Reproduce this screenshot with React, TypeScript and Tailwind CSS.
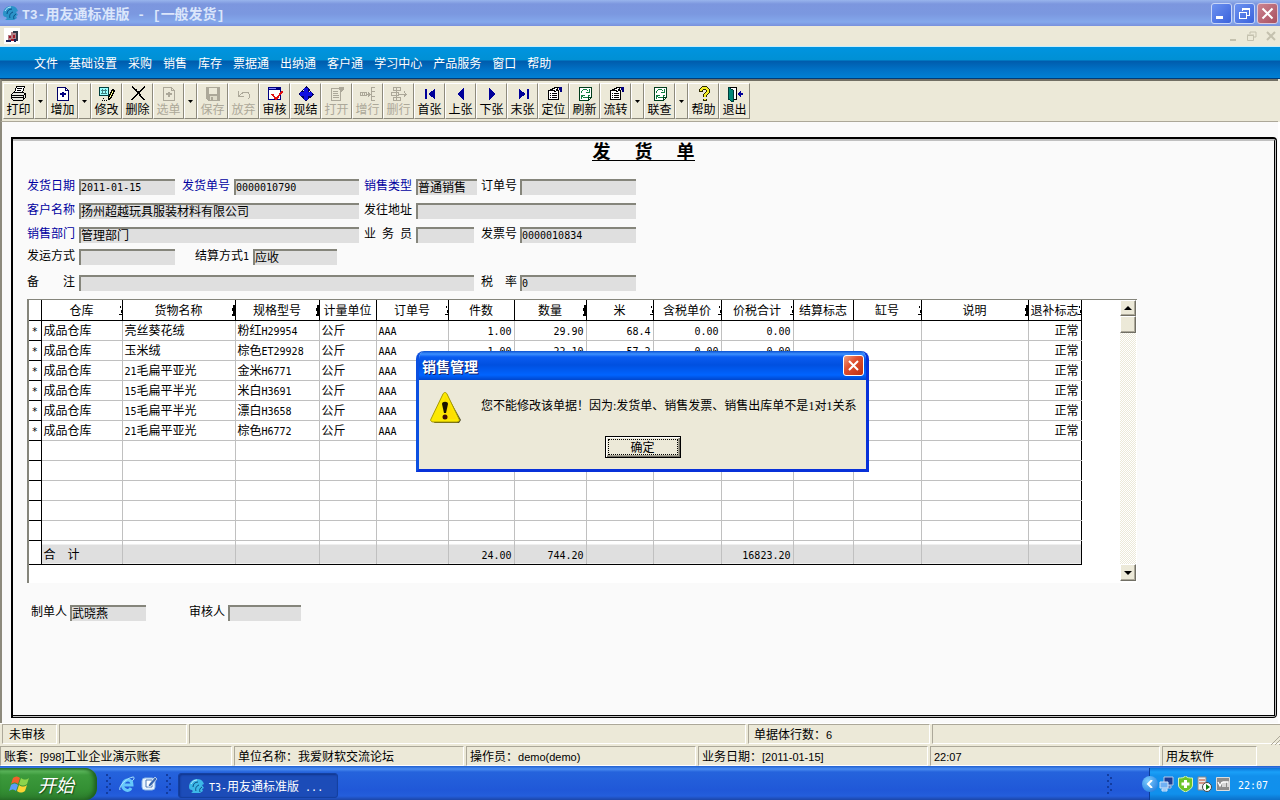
import type { ReactNode } from 'react';
import { clsx } from 'clsx';

type Tool = { name: string; icon: ReactNode; menu?: boolean; disabled?: boolean };
type Column = { title: string; width: number; align?: 'right'; mark?: 'solid' | 'thin' };

const menus = ['文件', '基础设置', '采购', '销售', '库存', '票据通', '出纳通', '客户通', '学习中心', '产品服务', '窗口', '帮助'];

const columns: Column[] = [
  { title: '仓库', width: 81, mark: 'thin' },
  { title: '货物名称', width: 113, mark: 'solid' },
  { title: '规格型号', width: 84, mark: 'solid' },
  { title: '计量单位', width: 57 },
  { title: '订单号', width: 72, mark: 'thin' },
  { title: '件数', width: 66, align: 'right' },
  { title: '数量', width: 72, align: 'right', mark: 'solid' },
  { title: '米', width: 67, align: 'right', mark: 'thin' },
  { title: '含税单价', width: 68, align: 'right', mark: 'thin' },
  { title: '价税合计', width: 72, align: 'right', mark: 'thin' },
  { title: '结算标志', width: 60 },
  { title: '缸号', width: 68, mark: 'thin' },
  { title: '说明', width: 107, mark: 'solid' },
  { title: '退补标志', width: 53, align: 'right', mark: 'thin' },
];

const rows = [
  ['成品仓库', '亮丝葵花绒', '粉红H29954', '公斤', 'AAA', '1.00', '29.90', '68.4', '0.00', '0.00', '', '', '', '正常'],
  ['成品仓库', '玉米绒', '棕色ET29928', '公斤', 'AAA', '1.00', '22.10', '57.2', '0.00', '0.00', '', '', '', '正常'],
  ['成品仓库', '21毛扁平亚光', '金米H6771', '公斤', 'AAA', '', '', '', '', '', '', '', '', '正常'],
  ['成品仓库', '15毛扁平半光', '米白H3691', '公斤', 'AAA', '', '', '', '', '', '', '', '', '正常'],
  ['成品仓库', '15毛扁平半光', '漂白H3658', '公斤', 'AAA', '', '', '', '', '', '', '', '', '正常'],
  ['成品仓库', '21毛扁平亚光', '棕色H6772', '公斤', 'AAA', '', '', '', '', '', '', '', '', '正常'],
];

const totals = ['合　计', '', '', '', '', '24.00', '744.20', '', '', '16823.20', '', '', '', ''];

const emptyRows = [0, 1, 2, 3, 4];

// Latin runs are set smaller so that two of them take the width of one Chinese character
function Mixed({ text, latin = "font-['DejaVu_Sans_Mono',monospace] text-[10px]" }: { text: string; latin?: string }) {
  return (
    <>
      {text.split(/([\x20-\x7e]+)/).filter(Boolean).map((part, i) =>
        /^[\x20-\x7e]+$/.test(part) ? <span key={i} className={clsx('leading-none whitespace-pre', latin)}>{part}</span> : part
      )}
    </>
  );
}

function Glyph({ children, size = 16 }: { children: ReactNode; size?: number }) {
  return (
    <svg width={size} height={size} viewBox="0 0 16 16" fill="none" shapeRendering="crispEdges" aria-hidden="true" className="shrink-0">
      {children}
    </svg>
  );
}

const printIcon = (
  <Glyph>
    <path d="M5.500 .5h8l-2 6h-8z" fill="#fff" stroke="#000" />
    <path d="M6 2.500h5M6 4.500h4" stroke="#000" />
    <path d="M2.500 6.500h10l2 2v3l-3 3h-9l-2-2v-4z" fill="#e8e8e0" stroke="#000" />
    <path d="M1 9.500h11M1 11.500h11M12.500 9v4M12 9.500l3-2" stroke="#000" />
  </Glyph>
);

const addIcon = (
  <Glyph>
    <path d="M2.500 1.500h8l3 3v10h-11z" fill="#fff" stroke="#000066" />
    <path d="M10.500 1.500v3h3" stroke="#000066" />
    <path d="M8 6v5M5 8h6" stroke="#000080" strokeWidth="2" />
  </Glyph>
);

const editIcon = (
  <Glyph>
    <path d="M.5 1.500h9v8h-9z" fill="#9ff" stroke="#004040" />
    <path d="M2 4.500h6M2 7.500h6M3.500 3v5M6.500 3v5" stroke="#408080" />
    <path d="M13.500 3.500l2 1-4 8-2 1v-2z" fill="#ff8" stroke="#000" />
    <path d="M3 14.500h1M5 14.500h1M7 14.500h1M4 12.500h1" stroke="#000" />
  </Glyph>
);

const deleteIcon = (
  <Glyph>
    <path d="M2 1l4 3 8 10M15 1L9 6l-7 8" stroke="#000" strokeWidth="1.600" />
  </Glyph>
);

const pickIcon = (
  <Glyph>
    <path d="M2.500 1.500h8l3 3v10h-11z" stroke="#aca899" />
    <path d="M10.500 1.500v3h3" stroke="#aca899" />
    <path d="M8 6v5M5 8h6" stroke="#aca899" strokeWidth="2" />
  </Glyph>
);

const saveIcon = (
  <Glyph>
    <path d="M1 1h14v14H3l-2-2z" fill="#aca899" />
    <path d="M4 2h8v6H4z" fill="#ece9d8" />
    <path d="M5 10h7v4H5z" fill="#dedbc9" />
    <path d="M6 11h2v3H6z" fill="#aca899" />
  </Glyph>
);

const undoIcon = (
  <Glyph>
    <path d="M2.500 5v5.500H8M3 10l4-3.500h5l1.500 2v3l-2 2" stroke="#aca899" />
  </Glyph>
);

const auditIcon = (
  <Glyph>
    <path d="M1.500 1.500h12v12h-12z" fill="#fff" stroke="#000080" />
    <path d="M1 1h13v3H1z" fill="#000080" />
    <path d="M2 2.500h7" stroke="#8888ff" />
    <path d="M5 8l4 5 7-8" stroke="#e01010" strokeWidth="2" />
  </Glyph>
);

const settleIcon = (
  <Glyph>
    <path d="M8 0l4 4-1 2 1-1 4 3-4 4-2-1 1 1-3 4-4-4 1-2-1 1-4-3 4-4 2 1-1-1z" fill="#000060" />
    <path d="M8 2v12M2 8h12" stroke="#1010e0" strokeWidth="4" />
  </Glyph>
);

const openIcon = (
  <Glyph>
    <path d="M2.500 2.500h9v12h-9zM4 5.500h5M4 7.500h5M4 9.500h6M4 11.500h6" stroke="#aca899" />
    <path d="M10 1h5v3l-2 1-2 2V4h-1z" fill="#aca899" />
  </Glyph>
);

const insertIcon = (
  <Glyph>
    <path d="M.5 6.500h6v3h-6zM2.500 6v4M4.500 6v4M7 8.500h3M8 6.500l2 2-2 2M11.500 2v12M11 1.500h4M11 5.500h4M11 10.500h4M11 14.500h4" stroke="#aca899" />
  </Glyph>
);

const removeIcon = (
  <Glyph>
    <path d="M2.500 1.500h7v3h-7zM2.500 11.500h7v3h-7zM.5 6.500h7v3h-7zM8 8.500h7M13 5.500l2 3-2 2M5.500 1v13" stroke="#aca899" />
  </Glyph>
);

const firstIcon = (
  <Glyph>
    <path d="M3 3h2v10H3zM13 3v10L6 8z" fill="#000099" />
  </Glyph>
);

const prevIcon = (
  <Glyph>
    <path d="M11 2v12L4 8z" fill="#000099" />
  </Glyph>
);

const nextIcon = (
  <Glyph>
    <path d="M5 2v12l7-6z" fill="#000099" />
  </Glyph>
);

const lastIcon = (
  <Glyph>
    <path d="M12 3h2v10h-2zM4 3v10l7-5z" fill="#000099" />
  </Glyph>
);

const locateIcon = (
  <Glyph>
    <path d="M2.500 4.500h10v9h-10z" fill="#fff" stroke="#000" />
    <path d="M4 7.500h1M6 7.500h5M4 9.500h1M6 9.500h5M4 11.500h1M6 11.500h5" stroke="#000" />
    <path d="M5.500 3.500l4-2h3l-3 4z" fill="#fff" stroke="#000" />
    <path d="M13 1h3v5h-2z" fill="#000080" />
  </Glyph>
);

const refreshIcon = (
  <Glyph>
    <path d="M2.500 1.500h12v10l-3 3h-9z" fill="#fff" stroke="#003c1c" />
    <path d="M4.500 7V5.500l2-2h3l2 2M12.500 3v3.500H9M12.500 9l-2 2.500h-4l-2-2M4.500 13V9.500H8" stroke="#108040" />
    <path d="M11.500 15v-3.500H15" stroke="#003c1c" />
  </Glyph>
);

const helpIcon = (
  <Glyph>
    <path d="M5 6V4l2-2h3l2 2v2L9 9v2M9 12.500v2" stroke="#2c2800" strokeWidth="4" />
    <path d="M5 5V4l2-2h3l2 2v2L9 9v2M9 13v1" stroke="#f4ee28" strokeWidth="2" />
  </Glyph>
);

const exitIcon = (
  <Glyph>
    <path d="M1.500 1.500h8v12h-8z" fill="#fff" stroke="#000" />
    <path d="M1 1l5 3v12l-5-3z" fill="#008878" stroke="#003c38" />
    <path d="M10 8l4-4v8z" fill="#000099" />
    <path d="M13 8h3" stroke="#000099" strokeWidth="2" />
  </Glyph>
);

const tools: Tool[] = [
  { name: '打印', icon: printIcon, menu: true },
  { name: '增加', icon: addIcon, menu: true },
  { name: '修改', icon: editIcon },
  { name: '删除', icon: deleteIcon },
  { name: '选单', icon: pickIcon, menu: true, disabled: true },
  { name: '保存', icon: saveIcon, disabled: true },
  { name: '放弃', icon: undoIcon, disabled: true },
  { name: '审核', icon: auditIcon },
  { name: '现结', icon: settleIcon },
  { name: '打开', icon: openIcon, disabled: true },
  { name: '增行', icon: insertIcon, disabled: true },
  { name: '删行', icon: removeIcon, disabled: true },
  { name: '首张', icon: firstIcon },
  { name: '上张', icon: prevIcon },
  { name: '下张', icon: nextIcon },
  { name: '末张', icon: lastIcon },
  { name: '定位', icon: locateIcon },
  { name: '刷新', icon: refreshIcon },
  { name: '流转', icon: locateIcon, menu: true },
  { name: '联查', icon: refreshIcon, menu: true },
  { name: '帮助', icon: helpIcon },
  { name: '退出', icon: exitIcon },
];

function AppLogo({ color }: { color: string }) {
  return (
    <svg width="17" height="16" viewBox="0 0 17 16" aria-hidden="true" className="shrink-0">
      <path d="M1 9C1 4 5 1 9 1c3 0 5 1 6 3l1 2-2 1 2 3-2 1 1 2-3 2H3c2-1 2-2 1-3-2 0-3-1-3-3z" fill={color} />
      <path d="M5 9c0-3 2-5 5-5M8 13c-1-2 0-5 3-6M12 14c-1-2 0-4 2-5" fill="none" stroke="#0b4f86" strokeWidth="1" />
      <path d="M3 6c1-2 3-4 6-4" fill="none" stroke="#b8ecff" strokeWidth="1" />
    </svg>
  );
}

function ToolbarButton({ tool }: { tool: Tool }) {
  const edge = 'border border-t-white border-l-white border-r-[#8d8a7c] border-b-[#8d8a7c]';
  return (
    <div className="flex">
      <button
        disabled={tool.disabled}
        className={clsx('flex h-9 w-[31px] flex-col items-center pt-[2px]', edge, tool.disabled ? 'text-[#aca899]' : 'text-black')}
      >
        {tool.icon}
        <span className="text-xs leading-[14px] whitespace-nowrap">{tool.name}</span>
      </button>
      {tool.menu && (
        <button aria-label={`${tool.name}菜单`} className={clsx('flex h-9 w-[13px] items-center justify-center', edge)}>
          <svg width="5" height="3" viewBox="0 0 5 3" aria-hidden="true"><path d="M0 0h5L2.500 3z" /></svg>
        </button>
      )}
    </div>
  );
}

function Field({ id, label, value = '', width, labelWidth = 'w-[52px]', blue, className }: {
  id: string; label: string; value?: string; width: string; labelWidth?: string; blue?: boolean; className?: string;
}) {
  const latin = /^[\x20-\x7e]*$/.test(value);
  return (
    <div className={clsx('flex items-start', className)}>
      <label htmlFor={id} className={clsx('text-xs leading-3 whitespace-nowrap', labelWidth, blue && 'text-[#0000a0]')}>
        <Mixed text={label} />
      </label>
      <input
        id={id}
        defaultValue={value}
        readOnly
        className={clsx(
          'h-4 border-t-2 border-l-2 border-[#85857b] bg-[#dfdfdf] leading-[14px] outline-none',
          latin ? "pb-[2px] font-['DejaVu_Sans_Mono',monospace] text-[10px]" : 'pb-1 text-xs',
          width
        )}
      />
    </div>
  );
}

function HeadMark({ kind }: { kind: 'solid' | 'thin' }) {
  return (
    <svg width="3" height="11" viewBox="0 0 3 11" shapeRendering="crispEdges" aria-hidden="true" className="absolute right-0 bottom-1">
      {kind === 'solid' ? <path d="M1 0h2v11H0V9h1V6H0V3h1z" /> : <path d="M1 1h1v2H1zM2 5h1v3H2zM0 9h3v1H0z" />}
    </svg>
  );
}

function DocumentTable() {
  return (
    <table className="table-fixed border-collapse self-start bg-white text-xs">
      <colgroup>
        <col width={12} />
        {columns.map(col => <col key={col.title} width={col.width} />)}
      </colgroup>
      <thead>
        <tr className="h-5">
          <th aria-label="标记" className="border-r border-b border-black p-0" />
          {columns.map(col => (
            <th key={col.title} className="relative overflow-hidden border-r border-b border-black p-0 leading-4 font-normal whitespace-nowrap">
              {col.title}
              {col.mark && <HeadMark kind={col.mark} />}
            </th>
          ))}
        </tr>
      </thead>
      <tbody>
        {rows.map((row, i) => (
          <tr key={i} className="h-5">
            <td className="border-r border-b border-black p-0 text-center leading-4"><Mixed text="*" /></td>
            {row.map((cell, c) => (
              <td
                key={c}
                className={clsx(
                  'border-r border-b border-[#c0c0c0] p-0 px-[2px] leading-4 whitespace-nowrap last:border-r-black',
                  columns[c].align === 'right' && 'text-right'
                )}
              >
                <Mixed text={cell} />
              </td>
            ))}
          </tr>
        ))}
        {emptyRows.map(i => (
          <tr key={i} className="h-5">
            <td className="border-r border-b border-black p-0" />
            {columns.map(col => <td key={col.title} className="border-r border-b border-[#c0c0c0] p-0 last:border-r-black" />)}
          </tr>
        ))}
      </tbody>
      <tfoot>
        <tr className="h-6">
          <td className="border-r border-b border-black p-0" />
          {totals.map((cell, c) => (
            <td
              key={c}
              className={clsx(
                'border-r border-b border-r-[#c0c0c0] border-b-black bg-[linear-gradient(#fff_4px,#dfdfdf_4px)] p-0 px-[2px] pt-1 leading-4 whitespace-nowrap last:border-r-black',
                columns[c].align === 'right' && 'text-right'
              )}
            >
              <Mixed text={cell} />
            </td>
          ))}
        </tr>
      </tfoot>
    </table>
  );
}

function ScrollBar() {
  const bevel = 'flex w-4 items-center justify-center border border-t-white border-l-white border-r-[#716f64] border-b-[#716f64] bg-[#ece9d8] shadow-[inset_-1px_-1px_#aca899]';
  return (
    <div className="flex w-4 shrink-0 flex-col bg-[repeating-conic-gradient(#ece9d8_0%_25%,#fff_0%_50%)] bg-[length:2px_2px]">
      <button aria-label="向上滚动" className={clsx('h-4', bevel)}>
        <svg width="8" height="4" viewBox="0 0 8 4" aria-hidden="true"><path d="M4 0l4 4H0z" /></svg>
      </button>
      <div className={clsx('h-[17px]', bevel)} />
      <div className="flex-1" />
      <button aria-label="向下滚动" className={clsx('h-[17px]', bevel)}>
        <svg width="8" height="4" viewBox="0 0 8 4" aria-hidden="true"><path d="M0 0h8L4 4z" /></svg>
      </button>
    </div>
  );
}

function Panel({ text = '', className }: { text?: string; className?: string }) {
  return (
    <div className={clsx('h-5 border border-t-[#aca899] border-l-[#aca899] border-r-white border-b-white leading-[18px] whitespace-nowrap', className)}>
      <Mixed text={text} latin="font-['Liberation_Sans',sans-serif] text-[11px]" />
    </div>
  );
}

function WarningDialog() {
  return (
    <div
      role="dialog"
      aria-labelledby="dialog-title"
      className="absolute top-[351px] left-[416px] w-[453px] overflow-hidden rounded-t-lg border-[3px] border-t-0 border-[#0831d9] border-l-[#0c50e0] bg-[#ece9d8]"
    >
      <div className="flex h-[29px] items-center justify-between bg-[linear-gradient(#0a50d0,#3c90ff_3px,#0a5cf0_6px,#0050e0_14px,#0064ff_24px,#0046cc)] pr-[2px] pl-[3px]">
        <h2 id="dialog-title" className="text-sm font-bold text-white [text-shadow:1px_1px_#10206c]">销售管理</h2>
        <button aria-label="关闭" className="flex h-[21px] w-[21px] items-center justify-center rounded-[3px] border border-white bg-[linear-gradient(135deg,#f0a080,#e05030_40%,#c03010)]">
          <svg width="11" height="11" viewBox="0 0 11 11" aria-hidden="true"><path d="M1 1l9 9M10 1l-9 9" stroke="#fff" strokeWidth="2" /></svg>
        </button>
      </div>
      <div className="flex items-start pt-3 pl-[11px]">
        <svg width="32" height="32" viewBox="0 0 32 32" aria-hidden="true" className="shrink-0">
          <path d="M17 3l14 25-2 3H4z" fill="#55512c" />
          <path d="M13 2c1-2 3-2 4 0l12 25c1 1 0 3-2 3H3c-2 0-3-2-2-3z" fill="#fce903" stroke="#a89a00" />
          <path d="M15 3l12 24H14z" fill="#ffd800" opacity=".6" />
          <path d="M12 12c0-3 6-3 6 0l-2 9h-2z" fill="#1a1200" />
          <circle cx="15" cy="25" r="2.500" fill="#401008" />
        </svg>
        <p className="pt-[5px] pl-[19px] text-xs leading-4 whitespace-nowrap">
          <Mixed text="您不能修改该单据！因为:发货单、销售发票、销售出库单不是1对1关系" latin="font-['Liberation_Serif',serif] text-xs" />
        </p>
      </div>
      <div className="flex justify-center pt-3 pb-[11px]">
        <button className="h-[22px] w-[76px] border border-black bg-[#ece9d8] p-[2px] text-xs shadow-[inset_1px_1px_#fff,inset_-1px_-1px_#716f64,inset_-2px_-2px_#aca899]">
          <span className="flex h-full items-center justify-center border border-dotted border-black leading-3">确定</span>
        </button>
      </div>
    </div>
  );
}

function Grip() {
  return (
    <svg width="6" height="22" viewBox="0 0 6 22" shapeRendering="crispEdges" aria-hidden="true" className="shrink-0">
      <path d="M0 1h2v2H0zM3 4h2v2H3zM0 7h2v2H0zM3 10h2v2H3zM0 13h2v2H0zM3 16h2v2H3zM0 19h2v2H0z" fill="#123ca0" />
    </svg>
  );
}

function Taskbar() {
  return (
    <footer className="flex h-[34px] items-stretch bg-[linear-gradient(#1f5fd0,#4a8cf0_3px,#2563dc_6px,#2058d8_24px,#245edc_30px,#1c46a8)] pt-[2px] text-xs text-white">
      <button className="flex w-[97px] items-center gap-[7px] rounded-r-xl bg-[linear-gradient(#2f7d2f,#5cb85c_3px,#3c9a3c_7px,#338f33_22px,#2c7a2c)] pl-[9px] shadow-[inset_-3px_0_4px_#1d5c1d]">
        <svg width="22" height="21" viewBox="0 0 22 21" aria-hidden="true">
          <path d="M4 4c3-2 5-2 7 0l-2 6C7 8 5 8 2 10z" fill="#f0602c" />
          <path d="M12 4c3 2 5 2 8 0l-2 6c-3 2-5 2-8 0z" fill="#8cd44c" />
          <path d="M2 11c3-2 5-2 7 0l-2 6c-2-2-4-2-7 0z" fill="#5c9cf8" />
          <path d="M10 11c3 2 5 2 8 0l-2 6c-3 2-5 2-8 0z" fill="#fcd434" />
        </svg>
        <span className="text-lg leading-5 italic [text-shadow:1px_1px_1px_#1a4a1a]">开始</span>
      </button>
      <div className="flex items-center pl-[9px]">
        <Grip />
        <a href="#ie" aria-label="浏览器" className="ml-[6px]">
          <svg width="18" height="18" viewBox="0 0 18 18" aria-hidden="true">
            <path d="M13 13c-1 2-3 3-5 2-3-1-4-4-3-6 1-3 3-4 5-4 3 0 4 2 4 5H5" fill="none" stroke="#66c8fa" strokeWidth="3" />
            <path d="M2 15c-2-3 6-12 13-13 2 0 1 3-1 4" fill="none" stroke="#a8e4ff" strokeWidth="1" />
          </svg>
        </a>
        <a href="#desktop" aria-label="显示桌面" className="ml-1">
          <svg width="18" height="18" viewBox="0 0 18 18" aria-hidden="true">
            <rect x="2" y="3" width="13" height="12" rx="3" fill="#e8f4ff" stroke="#8cb8e8" />
            <path d="M6 5h6v7H6z" fill="#fff" stroke="#4878b8" />
            <path d="M15 2l2 2-6 7-3 1 1-3z" fill="#3868b0" stroke="#fff" strokeWidth=".6" />
          </svg>
        </a>
        <span className="ml-2"><Grip /></span>
      </div>
      <button className="mt-[5px] mb-[2px] ml-[6px] flex w-40 items-center gap-1 rounded-[3px] border border-[#1440a0] bg-[#1c4cb8] pl-[9px] shadow-[inset_1px_1px_2px_#10348c]">
        <AppLogo color="#3cb8e8" />
        <span className="whitespace-pre"><Mixed text="T3-用友通标准版 ..." /></span>
      </button>
      <div className="flex flex-1 items-center justify-end pr-9"><Grip /></div>
      <div className="relative flex items-center gap-1 border-l border-[#0c3c98] bg-[linear-gradient(#0c74d8,#1aa0f8_4px,#1290ec_8px,#1090ec_26px,#0c70c8)] pr-3 pl-[9px]">
        <button aria-label="显示隐藏的图标" className="absolute top-2 -left-2 flex h-4 w-4 items-center justify-center rounded-full bg-[radial-gradient(circle_at_6px_5px,#7cccff,#1470d8)]">
          <svg width="8" height="8" viewBox="0 0 8 8" aria-hidden="true"><path d="M6 0L2 4l4 4" fill="none" stroke="#fff" strokeWidth="2" /></svg>
        </button>
        <svg width="15" height="16" viewBox="0 0 15 16" aria-hidden="true">
          <path d="M5 1h9v8H5zM8 10h4v2H8z" fill="#1c3c94" stroke="#b8c8e8" />
          <path d="M1 6h8v6H1zM3 13h5v2H3z" fill="#70b0f4" stroke="#d4e4f8" />
        </svg>
        <svg width="15" height="16" viewBox="0 0 15 16" aria-hidden="true">
          <path d="M7.500 0c2 2 4 2 7 2v7c0 3-3 5-7 7-4-2-7-4-7-7V2c3 0 5 0 7-2z" fill="#6cc428" stroke="#d8f4b8" />
          <path d="M7.500 4v8M3.500 8h8" stroke="#fff" strokeWidth="3" />
        </svg>
        <svg width="15" height="16" viewBox="0 0 15 16" aria-hidden="true">
          <path d="M1 1h8v13H1z" fill="#ececec" stroke="#888" />
          <path d="M2 4h6M2 7h6" stroke="#c04020" />
          <circle cx="10" cy="11" r="4.500" fill="#fff" stroke="#444" />
          <path d="M9 8v6l4-3z" fill="#108010" />
        </svg>
        <svg width="14" height="14" viewBox="0 0 14 14" aria-hidden="true">
          <path d="M.5.5h13v13H.5z" fill="#8c8c8c" stroke="#ddd" />
          <path d="M2 5l2 4 2-4M7 10V5h2v5M9 5h3v5" fill="none" stroke="#fff" strokeWidth="1.300" />
        </svg>
        <time className="pl-1"><Mixed text="22:07" /></time>
      </div>
    </footer>
  );
}

export default function App() {
  return (
    <div className="relative flex min-h-screen flex-col overflow-hidden bg-[#ece9d8] font-['Noto_Sans_CJK_SC',sans-serif] text-xs text-black">
      <header className="flex h-[26px] items-center bg-[linear-gradient(#98b4ec,#7c96de_4px,#7b98e0_14px,#84a8ec_22px,#7890dc)] pr-[2px] pl-[2px]">
        <AppLogo color="#2b93c8" />
        <h1 className="pl-[3px] text-sm leading-5 font-bold text-[#dbe6fb]">
          <Mixed text="T3-用友通标准版 - [一般发货]" latin="font-['Liberation_Mono',monospace] text-[13px]" />
        </h1>
        <div className="ml-auto flex gap-[2px]">
          <button aria-label="最小化" className="h-[21px] w-[21px] rounded-[3px] border border-[#c8d6f8] bg-[linear-gradient(135deg,#6d92f0,#3a62dc)]">
            <svg width="19" height="19" viewBox="0 0 19 19" aria-hidden="true"><path d="M4 12h7v3H4z" fill="#fff" /></svg>
          </button>
          <button aria-label="还原" className="h-[21px] w-[21px] rounded-[3px] border border-[#c8d6f8] bg-[linear-gradient(135deg,#6d92f0,#3a62dc)]">
            <svg width="19" height="19" viewBox="0 0 19 19" fill="none" stroke="#fff" shapeRendering="crispEdges" aria-hidden="true"><path d="M4.500 8.500h7v6h-7zM4 8h8M7 7V5h7v6h-2M7 4.500h8" /></svg>
          </button>
          <button aria-label="关闭" className="h-[21px] w-[21px] rounded-[3px] border border-[#e0c8d8] bg-[linear-gradient(135deg,#cc8490,#a85060)]">
            <svg width="19" height="19" viewBox="0 0 19 19" aria-hidden="true"><path d="M4.500 4.500l10 10M14.500 4.500l-10 10" stroke="#fff" strokeWidth="2" /></svg>
          </button>
        </div>
      </header>

      <div className="flex h-5 items-center justify-between pr-1 pl-1">
        <svg width="16" height="16" viewBox="0 0 16 16" shapeRendering="crispEdges" aria-hidden="true" className="bg-white">
          <path d="M7 4h6v3H7zM4 7h9v5H4z" fill="#b08088" />
          <path d="M9 3h5v2H9zM12 4h2v9h-2z" fill="#303848" />
          <path d="M5 8h2v2H5zM9 7h2v3H9zM7 11h3v2H7z" fill="#a01828" />
          <path d="M2 12h5v2H2zM10 11h2v3h-2z" fill="#182058" />
        </svg>
        <div className="flex items-center gap-[9px]">
          <button aria-label="最小化文档"><svg width="10" height="10" viewBox="0 0 10 10" className="block" aria-hidden="true"><path d="M2 8h6v2H2z" fill="#c4c1ae" /></svg></button>
          <button aria-label="还原文档"><svg width="10" height="10" viewBox="0 0 10 10" className="block" fill="none" stroke="#c4c1ae" aria-hidden="true"><path d="M.5 4.500h6v5h-6zM0 4h7M3 3V1h6v5H7" /></svg></button>
          <button aria-label="关闭文档"><svg width="10" height="10" viewBox="0 0 10 10" className="block" aria-hidden="true"><path d="M1 1l8 8M9 1L1 9" stroke="#c4c1ae" strokeWidth="2" /></svg></button>
        </div>
      </div>

      <nav className="flex h-[33px] items-center gap-[11px] border-t border-b border-t-[#c8ecfa] border-b-[#003c78] bg-[linear-gradient(#0094e0,#0090d4_13px,#005cac_14px,#0070c4_22px,#0080d4)] pl-[34px] text-white">
        {menus.map(name => <button key={name} className="text-xs leading-4 whitespace-nowrap">{name}</button>)}
      </nav>

      <div role="toolbar" aria-label="单据工具" className="mr-[2px] flex h-[43px] items-start border-t-2 border-b border-l-2 border-t-[#716f64] border-b-[#aca899] border-l-[#8d8a7c] pt-[2px] pl-px">
        {tools.map(tool => <ToolbarButton key={tool.name} tool={tool} />)}
      </div>

      <main className="flex flex-1 flex-col border-r-2 border-l-2 border-r-white border-l-[#8d8a7c] bg-[#fafafa] pt-[15px] pr-px pb-[5px] pl-[9px]">
        <div className="flex flex-1 flex-col rounded-r-sm border-t-2 border-r border-b border-l-2 border-black bg-[#c0c0c0] pr-px pb-px">
          <div className="flex-1 border-t-2 border-r border-b border-t-[#c0c0c0] border-r-black border-b-black bg-[#fafafa]">
            <div className="mb-[18px] flex justify-center">
              <h2 className="border-b border-black pt-[3px] font-['Liberation_Serif','Noto_Sans_CJK_SC',serif] text-lg leading-4 font-bold whitespace-pre">{'发\u3000\u2004货\u3000\u2004单'}</h2>
            </div>

            <form className="pl-[14px]">
              <div className="flex h-6">
                <Field id="date" label="发货日期" value="2011-01-15" width="w-24" blue />
                <Field id="bill-no" label="发货单号" value="0000010790" width="w-[125px]" className="ml-[7px]" blue />
                <Field id="sale-type" label="销售类型" value="普通销售" width="w-[61px]" className="ml-[5px]" blue />
                <Field id="order-no" label="订单号" width="w-[116px]" labelWidth="w-[39px]" className="ml-1" />
              </div>
              <div className="flex h-6">
                <Field id="customer" label="客户名称" value="扬州超越玩具服装材料有限公司" width="w-[280px]" blue />
                <Field id="address" label="发往地址" width="w-[220px]" className="ml-[5px]" />
              </div>
              <div className="flex h-[22px]">
                <Field id="department" label="销售部门" value="管理部门" width="w-[280px]" blue />
                <Field id="clerk" label={'业\u2002务\u2002员'} width="w-[58px]" className="ml-[5px]" />
                <Field id="invoice" label="发票号" value="0000010834" width="w-[116px]" labelWidth="w-[39px]" className="ml-[7px]" />
              </div>
              <div className="flex h-[26px]">
                <Field id="shipping" label="发运方式" width="w-24" />
                <Field id="settlement" label="结算方式1" value="应收" width="w-[84px]" labelWidth="w-[58px]" className="ml-5" />
              </div>
              <div className="flex h-6">
                <Field id="remark" label="备　　注" width="w-[395px]" />
                <Field id="tax" label="税　率" value="0" width="w-[116px]" labelWidth="w-[39px]" className="ml-[7px]" />
              </div>
            </form>

            <div className="mr-[137px] ml-[14px] flex h-[284px] justify-between border-t border-l-2 border-[#85857b] bg-white pr-px pb-[2px]">
              <DocumentTable />
              <ScrollBar />
            </div>

            <div className="flex pt-[22px] pl-[18px]">
              <Field id="maker" label="制单人" value="武晓燕" width="w-[76px]" labelWidth="w-[39px]" />
              <Field id="auditor" label="审核人" width="w-[73px]" labelWidth="w-[39px]" className="ml-[43px]" />
            </div>
          </div>
        </div>
      </main>

      <div className="flex h-[22px] items-start gap-[2px] border-t border-white pl-[2px]">
        <Panel text="未审核" className="w-[55px] pl-[6px]" />
        <Panel className="w-32" />
        <Panel className="flex-1" />
        <Panel text="单据体行数：6" className="w-[182px] pl-[5px]" />
        <Panel className="w-[349px]" />
        <svg width="9" height="9" viewBox="0 0 9 9" aria-hidden="true" className="-ml-3 self-end"><path d="M0 9l9-9M4 9l5-5M8 9l1-1" stroke="#aca899" /></svg>
      </div>
      <div className="flex h-[21px] items-start gap-[2px] pt-px">
        <Panel text="账套：[998]工业企业演示账套" className="w-[232px] pl-[3px]" />
        <Panel text="单位名称：我爱财软交流论坛" className="w-[230px] pl-[3px]" />
        <Panel text="操作员：demo(demo)" className="w-[230px] pl-[3px]" />
        <Panel text="业务日期：[2011-01-15]" className="w-[230px] pl-[3px]" />
        <Panel text="22:07" className="w-[230px] pl-[3px]" />
        <Panel text="用友软件" className="w-[95px] pl-[3px]" />
      </div>

      <Taskbar />
      <WarningDialog />
    </div>
  );
}
